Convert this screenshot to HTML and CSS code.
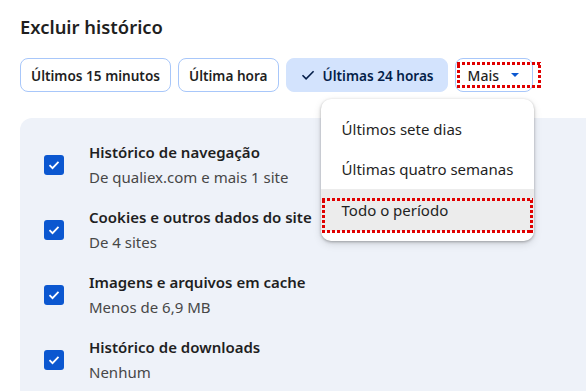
FILE: index.html
```html
<!DOCTYPE html>
<html lang="pt-BR">
<head>
<meta charset="UTF-8" />
<title>Excluir histórico</title>
<link rel="stylesheet" href="styles.css">
</head>
<body>
  <div class="page">
    <!-- Titre -->
    <h1>Excluir histórico</h1>

    <!-- Intervalles -->
    <div class="chips">
      <button class="chip">Últimos 15 minutos</button>
      <button class="chip">Última hora</button>
      <button class="chip selected">
        <svg width="14" height="14" viewBox="0 0 14 14"><path d="M1.5 7.2l3.6 3.6L12.6 3.3" fill="none" stroke="#041e49" stroke-width="1.6"/></svg>
        Últimas 24 horas
      </button>
      <div class="more-wrap">
        <button class="chip more">Mais <span class="caret"></span></button>

        <!-- Menu déroulant -->
        <div class="menu">
          <div class="menu-item">Últimos sete dias</div>
          <div class="menu-item">Últimas quatro semanas</div>
          <div class="menu-item active">Todo o período</div>
        </div>
      </div>
    </div>

    <!-- Liste des données -->
    <div class="panel">
      <div class="row">
        <span class="check"><svg width="12" height="10" viewBox="0 0 12 10"><path d="M1.5 5.2l3 3L10.5 1.8" fill="none" stroke="#fff" stroke-width="1.8"/></svg></span>
        <div class="texts">
          <div class="label">Histórico de navegação</div>
          <div class="sub">De qualiex.com e mais 1 site</div>
        </div>
      </div>
      <div class="row">
        <span class="check"><svg width="12" height="10" viewBox="0 0 12 10"><path d="M1.5 5.2l3 3L10.5 1.8" fill="none" stroke="#fff" stroke-width="1.8"/></svg></span>
        <div class="texts">
          <div class="label">Cookies e outros dados do site</div>
          <div class="sub">De 4 sites</div>
        </div>
      </div>
      <div class="row">
        <span class="check"><svg width="12" height="10" viewBox="0 0 12 10"><path d="M1.5 5.2l3 3L10.5 1.8" fill="none" stroke="#fff" stroke-width="1.8"/></svg></span>
        <div class="texts">
          <div class="label">Imagens e arquivos em cache</div>
          <div class="sub">Menos de 6,9 MB</div>
        </div>
      </div>
      <div class="row">
        <span class="check"><svg width="12" height="10" viewBox="0 0 12 10"><path d="M1.5 5.2l3 3L10.5 1.8" fill="none" stroke="#fff" stroke-width="1.8"/></svg></span>
        <div class="texts">
          <div class="label">Histórico de downloads</div>
          <div class="sub">Nenhum</div>
        </div>
      </div>
    </div>
  </div>
</body>
</html>
```

FILE: styles.css
```css
/* ========== Global ========== */
html, body {
  margin: 0;
  height: 100%;
  overflow: hidden;
  font-family: "Noto Sans", "Open Sans", sans-serif;
  color: #1f1f1f;
  background: #fff;
}
.page {
  padding: 14px 0 0 20px;
}
/* Titre */
h1 {
  margin: 0;
  font-size: 18.4px;
  font-weight: 600;
  line-height: 26px;
}
/* Boutons intervalle */
.chips {
  display: flex;
  gap: 7px;
  margin-top: 18px;
}
.chip {
  height: 34px;
  box-sizing: border-box;
  padding: 0 10px;
  border: 1px solid #a8c7fa;
  border-radius: 8px;
  background: #fff;
  font-family: inherit;
  font-size: 13.6px;
  font-weight: 600;
  color: #1f1f1f;
  display: flex;
  align-items: center;
  gap: 8px;
}
.chip.selected {
  background: #d3e3fd;
  border-color: #d3e3fd;
  color: #041e49;
  padding: 0 13px 0 14px;
}
.more-wrap {
  position: relative;
}
.chip.more {
  position: relative;
  padding: 0 13px 0 12px;
  gap: 12px;
  font-size: 14px;
  font-weight: 500;
}
.caret {
  width: 0;
  height: 0;
  border-left: 4px solid transparent;
  border-right: 4px solid transparent;
  border-top: 4px solid #0b57d0;
}
/* Contour pointillé rouge */
.chip.more::after,
.menu-item.active::after {
  content: "";
  position: absolute;
  background:
    repeating-linear-gradient(90deg, #e00000 0 3px, transparent 3px 5px) top / 100% 3px no-repeat,
    repeating-linear-gradient(90deg, #e00000 0 3px, transparent 3px 5px) bottom / 100% 3px no-repeat,
    repeating-linear-gradient(0deg, #e00000 0 3px, transparent 3px 5px) left / 3px 100% no-repeat,
    repeating-linear-gradient(0deg, #e00000 0 3px, transparent 3px 5px) right / 3px 100% no-repeat;
}
.chip.more::after {
  left: 1px;
  right: -9px;
  top: 3px;
  bottom: 3px;
}
/* Menu */
.menu {
  position: absolute;
  top: 41px;
  left: -134px;
  width: 213px;
  padding: 10px 0;
  background: #fff;
  border-radius: 10px;
  box-shadow: 0 1px 3px rgba(0, 0, 0, 0.3), 0 3px 8px rgba(0, 0, 0, 0.12);
  z-index: 5;
}
.menu-item {
  position: relative;
  height: 40px;
  padding-left: 21px;
  display: flex;
  align-items: center;
  font-size: 15px;
  color: #1f1f1f;
}
.menu-item.active {
  background: #ececec;
  height: 42px;
}
.menu-item.active::after {
  left: 1px;
  right: 1px;
  top: 9px;
  bottom: -2px;
}
/* Panneau */
.panel {
  margin-top: 26px;
  background: #eef2f9;
  border-top-left-radius: 12px;
  padding: 14px 0 0 24px;
  height: 259px;
}
.row {
  height: 65px;
  display: flex;
  align-items: center;
  gap: 25px;
}
.check {
  width: 20px;
  height: 20px;
  border-radius: 3px;
  background: #0b57d0;
  display: flex;
  align-items: center;
  justify-content: center;
  margin-top: 1px;
}
.label {
  font-size: 15px;
  font-weight: 600;
  line-height: 22px;
}
.sub {
  font-size: 15px;
  color: #474747;
  line-height: 22px;
  margin-top: 3px;
}
```
